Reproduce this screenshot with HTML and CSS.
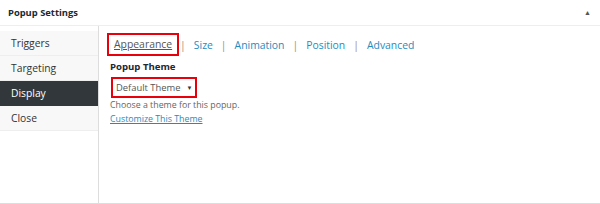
FILE: index.html
```html
<!DOCTYPE html>
<html lang="en">
<head>
    <meta charset="UTF-8">
    <title>Popup Settings</title>
    <link rel="stylesheet" href="styles.css">
</head>
<body>
    <div class="postbox">
        <div class="hndle">
            <span>Popup Settings</span>
            <span class="toggle">&#9650;</span>
        </div>
        <div class="inside">
            <ul class="tabs">
                <li>Triggers</li>
                <li>Targeting</li>
                <li class="active">Display</li>
                <li>Close</li>
            </ul>
            <div class="panel">
                <div class="subtabs">
                    <a class="subtab current">Appearance</a>
                    <span class="sep">|</span>
                    <a class="subtab">Size</a>
                    <span class="sep">|</span>
                    <a class="subtab">Animation</a>
                    <span class="sep">|</span>
                    <a class="subtab">Position</a>
                    <span class="sep">|</span>
                    <a class="subtab">Advanced</a>
                </div>
                <div class="field">
                    <label>Popup Theme</label>
                    <div class="select">
                        <span>Default Theme</span>
                        <span class="arrow">&#9660;</span>
                    </div>
                    <p class="desc">Choose a theme for this popup.</p>
                    <a class="link">Customize This Theme</a>
                </div>
            </div>
        </div>
    </div>
</body>
</html>
```

FILE: styles.css
```css
body {
    margin: 0;
    background: #fff;
    font-family: "Open Sans", Arial, sans-serif;
    color: #444;
}
.postbox {
    height: 203px;
    border-bottom: 1px solid #ddd;
    display: flex;
    flex-direction: column;
}
.hndle {
    height: 25px;
    border-bottom: 1px solid #eee;
    display: flex;
    align-items: center;
    justify-content: space-between;
    padding: 0 9px 0 8px;
    font-size: 9.4px;
    font-weight: bold;
    color: #23282d;
}
.toggle {
    font-size: 7px;
    color: #555;
}
.inside {
    flex: 1;
    display: flex;
}
.tabs {
    list-style: none;
    margin: 0;
    padding: 5px 0 0;
    width: 98px;
    border-right: 1px solid #ddd;
}
.tabs li {
    height: 24px;
    line-height: 25px;
    padding-left: 11px;
    font-size: 10.3px;
    background: #f8f8f8;
    border-bottom: 1px solid #eee;
    color: #333;
}
.tabs li.active {
    background: #32373c;
    color: #fff;
    border-bottom-color: #32373c;
}
.panel {
    flex: 1;
    padding: 7px 0 0 8px;
}
.subtabs {
    display: flex;
    align-items: center;
    height: 23px;
    font-size: 10.4px;
}
.subtab {
    color: #1e8cbe;
}
.subtab.current {
    color: #555;
    text-decoration: underline;
    border: 2px solid #e8000b;
    padding: 2px 5px;
    line-height: 15px;
}
.sep {
    color: #a08b7a;
    margin: 0 8px;
}
.subtab.current + .sep {
    margin-left: 1px;
}
.field {
    padding: 4px 0 0 3px;
}
.field label {
    display: block;
    font-size: 9.6px;
    font-weight: bold;
    color: #23282d;
    line-height: 14px;
}
.select {
    display: inline-flex;
    align-items: center;
    gap: 6px;
    margin: 3px 0 0 1px;
    height: 17px;
    padding: 0 3px;
    border: 2px solid #e8000b;
    font-size: 9.4px;
    color: #555;
}
.arrow {
    font-size: 6px;
    color: #333;
}
.desc {
    margin: 1px 0 0;
    font-size: 8.8px;
    line-height: 13px;
    color: #666;
}
.link {
    display: block;
    font-size: 8.8px;
    line-height: 14px;
    color: #1e8cbe;
    text-decoration: underline;
}
```
